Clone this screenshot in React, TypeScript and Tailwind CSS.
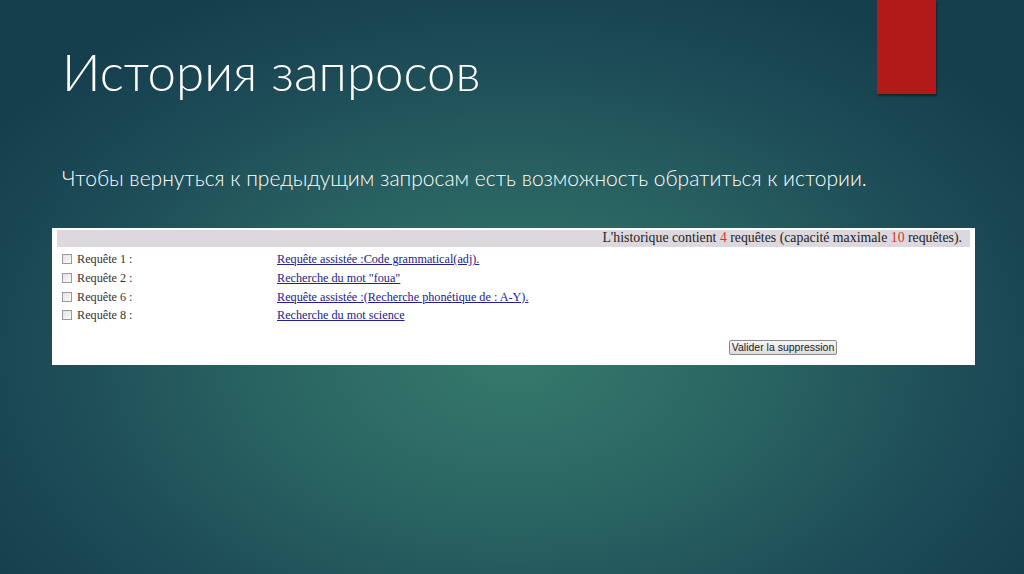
const rows = [
  { label: "Requête 1 :", link: "Requête assistée :Code grammatical(adj)." },
  { label: "Requête 2 :", link: 'Recherche du mot "foua"' },
  { label: "Requête 6 :", link: "Requête assistée :(Recherche phonétique de : A-Y)." },
  { label: "Requête 8 :", link: "Recherche du mot science" },
];

export default function App() {
  return (
    <div className="relative h-[574px] w-[1024px] overflow-hidden bg-[radial-gradient(ellipse_60%_70%_at_50%_62%,#367a6c_0%,#2a6462_40%,#1d4c57_75%,#163f4e_100%)]">
      {/* red accent tab */}
      <div className="absolute left-[877px] top-0 h-[94px] w-[59px] bg-[#b11a19] shadow-[1px_2px_2px_rgba(0,0,0,0.45)]" />

      <div className="flex flex-col pl-[62px] pt-[40px]">
        <h1 className="font-['Lato',sans-serif] text-[51px] font-light leading-[64px] text-white">
          История запросов
        </h1>
        <p className="mt-[60px] font-['Lato',sans-serif] text-[21px] font-light leading-[28px] text-white">
          Чтобы вернуться к предыдущим запросам есть возможность обратиться к истории.
        </p>
      </div>

      <div className="ml-[52px] mt-[36px] w-[923px] bg-white px-[5px] pb-[10px] pt-[2px] font-['Liberation_Serif',serif] text-[12.2px] text-[#333]">
        <div className="flex h-[17px] items-center justify-end bg-[#ddd8de] pr-[8px] text-[13.8px] text-[#222]">
          L'historique contient&nbsp;<span className="text-[#d4342c]">4</span>&nbsp;requêtes (capacité maximale&nbsp;
          <span className="text-[#d4342c]">10</span>&nbsp;requêtes).
        </div>
        <div className="mt-[3px] flex flex-col">
          {rows.map((r) => (
            <div key={r.label} className="flex h-[18.7px] items-center">
              <span className="ml-[5px] h-[10px] w-[10px] border border-[#9a9a9a] bg-gradient-to-br from-[#e4e4e4] to-[#fafafa]" />
              <span className="ml-[5px] w-[200px]">{r.label}</span>
              <a className="text-[#22228a] underline">{r.link}</a>
            </div>
          ))}
        </div>
        <div className="mt-[15px] flex">
          <button className="ml-[672px] h-[15px] w-[108px] whitespace-nowrap rounded-[2px] border border-[#8a8a8a] bg-gradient-to-b from-[#f6f6f6] to-[#dcdcdc] px-0 font-['Liberation_Sans',sans-serif] text-[10.5px] leading-[13px] text-[#222]">
            Valider la suppression
          </button>
        </div>
      </div>
    </div>
  );
}
